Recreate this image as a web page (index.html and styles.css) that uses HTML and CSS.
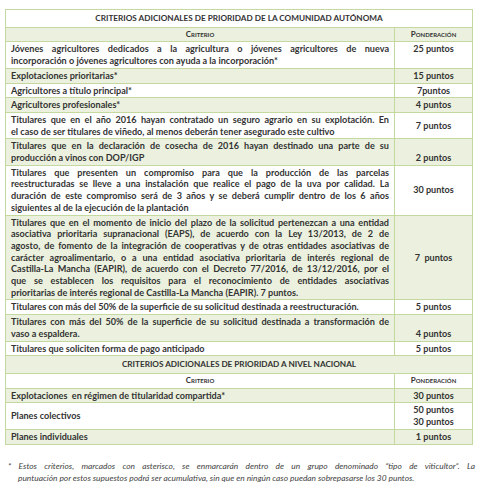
FILE: index.html
```html
<!DOCTYPE html>
<html lang="es">
<head>
<meta charset="utf-8">
<title>Criterios adicionales de prioridad</title>
<link rel="stylesheet" href="styles.css">
</head>
<body>
<div class="page">
<table class="crit">
  <colgroup><col class="c-left"><col class="c-right"></colgroup>
  <tr class="title w"><td colspan="2">CRITERIOS ADICIONALES DE PRIORIDAD DE LA COMUNIDAD AUTÓNOMA</td></tr>
  <tr class="head g"><td>Criterio</td><td>Ponderación</td></tr>
  <tr class="w"><td><span class="j">Jóvenes agricultores dedicados a la agricultura o jóvenes agricultores de nueva</span><span>incorporación o jóvenes agricultores con ayuda a la incorporación*</span></td><td class="top">25 puntos</td></tr>
  <tr class="g"><td>Explotaciones prioritarias*</td><td>15 puntos</td></tr>
  <tr class="w"><td>Agricultores a título principal*</td><td>7puntos</td></tr>
  <tr class="g"><td>Agricultores profesionales*</td><td>4 puntos</td></tr>
  <tr class="w"><td><span class="j">Titulares que en el año 2016 hayan contratado un seguro agrario en su explotación. En</span><span>el caso de ser titulares de viñedo, al menos deberán tener asegurado este cultivo</span></td><td>7 puntos</td></tr>
  <tr class="g"><td><span class="j">Titulares que en la declaración de cosecha de 2016 hayan destinado una parte de su</span><span>producción a vinos con DOP/IGP</span></td><td class="bot">2 puntos</td></tr>
  <tr class="w"><td><span class="j">Titulares que presenten un compromiso para que la producción de las parcelas</span><span class="j">reestructuradas se lleve a una instalación que realice el pago de la uva por calidad. La</span><span class="j">duración de este compromiso será de 3 años y se deberá cumplir dentro de los 6 años</span><span>siguientes al de la ejecución de la plantación</span></td><td>30 puntos</td></tr>
  <tr class="g"><td><span class="j">Titulares que en el momento de inicio del plazo de la solicitud pertenezcan a una entidad</span><span class="j">asociativa prioritaria supranacional (EAPS), de acuerdo con la Ley 13/2013, de 2 de</span><span class="j">agosto, de fomento de la integración de cooperativas y de otras entidades asociativas de</span><span class="j">carácter agroalimentario, o a una entidad asociativa prioritaria de interés regional de</span><span class="j">Castilla-La Mancha (EAPIR), de acuerdo con el Decreto 77/2016, de 13/12/2016, por el</span><span class="j">que se establecen los requisitos para el reconocimiento de entidades asociativas</span><span>prioritarias de interés regional de Castilla-La Mancha (EAPIR). 7 puntos.</span></td><td>7&nbsp; puntos</td></tr>
  <tr class="w"><td>Titulares con más del 50% de la superficie de su solicitud destinada a reestructuración.</td><td>5 puntos</td></tr>
  <tr class="g"><td><span class="j">Titulares con más del 50% de la superficie de su solicitud destinada a transformación de</span><span>vaso a espaldera.</span></td><td class="bot">4 puntos</td></tr>
  <tr class="w"><td>Titulares que soliciten forma de pago anticipado</td><td>5 puntos</td></tr>
  <tr class="title g"><td colspan="2">CRITERIOS ADICIONALES DE PRIORIDAD A NIVEL NACIONAL</td></tr>
  <tr class="head w"><td>Criterio</td><td>Ponderación</td></tr>
  <tr class="g"><td>Explotaciones&nbsp; en régimen de titularidad compartida*</td><td>30 puntos</td></tr>
  <tr class="w"><td>Planes colectivos</td><td><span>50 puntos</span><span>30 puntos</span></td></tr>
  <tr class="g"><td>Planes individuales</td><td>1 puntos</td></tr>
</table>
<p class="note"><span class="j">* Estos criterios, marcados con asterisco, se enmarcarán dentro de un grupo denominado “tipo de viticultor”. La</span><span class="ind">puntuación por estos supuestos podrá ser acumulativa, sin que en ningún caso puedan sobrepasarse los 30 puntos.</span></p>
</div>
</body>
</html>
```
FILE: styles.css
```css
html, body {
  margin: 0;
  padding: 0;
  background: #ffffff;
}
.page {
  padding: 9px 0 0 5px;
  font-family: Lato, "Liberation Sans", sans-serif;
  color: #333333;
}
.crit {
  border-collapse: collapse;
  width: 467px;
  table-layout: fixed;
  font-size: 9.1px;
  font-weight: 700;
  line-height: 11.7px;
}
.c-left { width: 389px; }
.c-right { width: 78px; }
.crit td {
  border: 1px solid #c4d9a0;
  padding: 1px 5px;
  vertical-align: middle;
}
.crit td span { display: block; }
.crit td span.j {
  text-align: justify;
  text-align-last: justify;
  white-space: nowrap;
}
.crit td:nth-child(2) { text-align: center; }
.crit td.top { vertical-align: top; }
.crit td.bot { vertical-align: bottom; }
.g td { background: #ebf1de; }
.w td { background: #ffffff; }
.title td {
  text-align: center;
  font-size: 8.2px;
  padding: 3px 5px 2px;
}
.head td {
  text-align: center;
  font-variant: small-caps;
  font-size: 8px;
  font-weight: 700;
}
.note {
  margin: 15px 0 0 3px;
  width: 467px;
  font-style: italic;
  font-size: 8.4px;
  line-height: 12px;
  color: #444444;
}
.note span { display: block; }
.note .j { text-align: justify; text-align-last: justify; white-space: nowrap; }
.note .ind { padding-left: 10px; }
```
